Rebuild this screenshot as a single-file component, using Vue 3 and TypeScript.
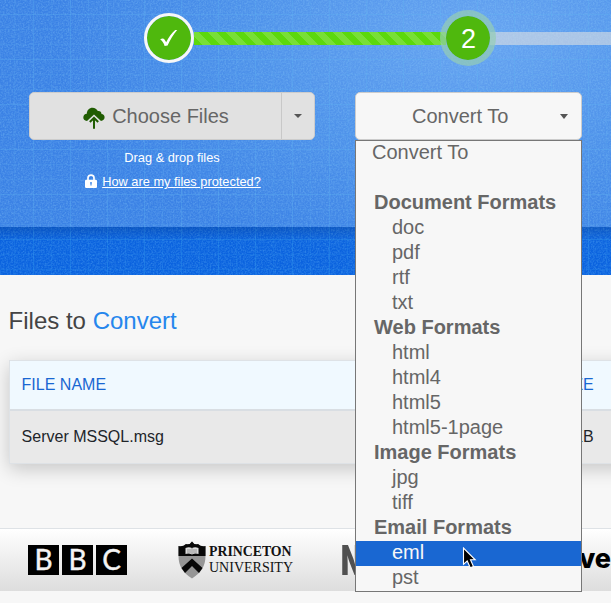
<script setup lang="ts">
import { ref } from 'vue'

interface Row {
  text: string
  kind: 'top' | 'group' | 'item'
}

const groups: { title: string; items: string[] }[] = [
  { title: 'Document Formats', items: ['doc', 'pdf', 'rtf', 'txt'] },
  { title: 'Web Formats', items: ['html', 'html4', 'html5', 'html5-1page'] },
  { title: 'Image Formats', items: ['jpg', 'tiff'] },
  { title: 'Email Formats', items: ['eml', 'pst'] },
]

const rows: Row[] = [
  { text: 'Convert To', kind: 'top' },
  { text: '', kind: 'top' },
  ...groups.flatMap((g): Row[] => [
    { text: g.title, kind: 'group' },
    ...g.items.map((text): Row => ({ text, kind: 'item' })),
  ]),
]

const active = ref('eml')
</script>

<template>
  <div class="page">
    <section class="hero">
      <svg class="texture" width="611" height="275" aria-hidden="true">
        <defs>
          <filter id="grain" x="0" y="0" width="100%" height="100%">
            <feTurbulence type="fractalNoise" baseFrequency="0.6" numOctaves="2" seed="4" />
            <feColorMatrix values="0 0 0 0 0.2  0 0 0 0 0.6  0 0 0 0 0.98  0.6 0 0 0 -0.22" />
          </filter>
          <pattern id="grid" x="33" y="14" width="37" height="45" patternUnits="userSpaceOnUse">
            <path d="M.5 0V45M0 .5H37" stroke="#35a0f0" stroke-opacity=".3" />
            <path d="M18.5 0V45M0 15.5H37M0 30.5H37" stroke="#35a0f0" stroke-opacity=".13" />
          </pattern>
        </defs>
        <rect width="611" height="275" filter="url(#grain)" />
        <rect width="611" height="275" fill="url(#grid)" />
      </svg>
      <div class="panel">
        <div class="steps">
          <div class="step done">
            <svg width="24" height="24" viewBox="0 0 24 24"><path d="M3.2 13.6C4.8 12 6.6 12 7.5 13.6L9.2 16.2C11.9 11 14.7 6.9 18.2 4H20.2C16.3 8.5 13.2 13.5 10.6 19.4L7.6 20C6.9 17.6 5.6 15.2 3.2 13.6Z" fill="#fff" /></svg>
          </div>
          <div class="bar filled"></div>
          <div class="step current">2</div>
          <div class="bar"></div>
        </div>
        <div class="actions">
          <div class="upload">
            <div class="button choose">
              <div class="choose-main">
                <svg width="22" height="22" viewBox="0 0 22 22">
                  <path d="M4 14C1.4 13.5.3 12 .3 10.4C.3 8.4 1.8 6.9 3.8 6.8C3.8 3.4 6.3.8 9.5.8C12 .8 13.8 2.1 14.8 4.1C17 3.7 18.5 5.1 18.5 7C20.4 7.2 21.6 8.6 21.6 10.3C21.6 12.4 20 13.8 18 14L11 7.6Z" fill="#205c02" />
                  <path d="M11 21.7V11.5M6.8 15L11 11L15.2 15" fill="none" stroke="#205c02" stroke-width="2" />
                </svg>
                <span>Choose Files</span>
              </div>
              <div class="choose-more"><i class="caret"></i></div>
            </div>
            <p class="hint">Drag &amp; drop files</p>
            <p class="hint protect">
              <svg width="12" height="14" viewBox="0 0 12 14">
                <path d="M3 7V3.8C3 .1 9 .1 9 3.8V7" fill="none" stroke="#fff" stroke-width="1.7" />
                <rect y="5.7" width="12" height="8.3" rx="1.2" fill="#fff" />
                <path d="M6 8V11.6M5 9H7" stroke="#4c8fe8" stroke-width="1.2" />
              </svg>
              <a>How are my files protected?</a>
            </p>
          </div>
          <div class="select">
            <div class="button convert"><span>Convert To</span><i class="caret"></i></div>
            <ul class="menu">
              <li v-for="(row, i) in rows" :key="i" :class="[row.kind, { active: row.text === active }]">{{ row.text }}</li>
            </ul>
          </div>
        </div>
      </div>
    </section>

    <section class="files">
      <h2>Files to <span>Convert</span></h2>
      <div class="table">
        <div class="row head"><span>FILE NAME</span><span class="size">SIZE</span></div>
        <div class="row"><span>Server MSSQL.msg</span><span class="size">77 KB</span></div>
      </div>
    </section>

    <section class="brands">
      <div class="bbc"><b>B</b><b>B</b><b>C</b></div>
      <div class="princeton">
        <svg width="28" height="38" viewBox="0 0 28 38">
          <path d="M.5 5Q5 6 8 3Q12 4 14 .5Q16 4 20 3Q23 6 27.5 5V15C27.5 25 23 32 14 37.5C5 32 .5 25 .5 15Z" fill="#969696" />
          <path d="M.5 5Q5 6 8 3Q12 4 14 .5Q16 4 20 3Q23 6 27.5 5V15H.5Z" fill="#080808" />
          <path d="M3.5 27L14 17.5L24.5 27L21 32L14 25L7 32Z" fill="#080808" />
          <path d="M7.5 7Q11 5.5 14 7Q17 5.5 20.5 7V13Q17 12 14 13.5Q11 12 7.5 13Z" fill="#ddd" />
          <path d="M9 9H13M9 11H13M15 9H19M15 11H19M14 7V13" stroke="#777" stroke-width=".7" />
        </svg>
        <div class="wordmark"><strong>PRINCETON</strong><span>UNIVERSITY</span></div>
      </div>
      <div class="letter">N</div>
      <div class="tail">ve</div>
    </section>

    <svg class="cursor" width="16" height="24" viewBox="0 0 16 24">
      <path d="M1.5 1V17.3L5.2 14L8.3 20.8L11.5 19.4L8.5 12.8H13.2Z" fill="#000" stroke="#fff" stroke-width="1.1" />
    </svg>
  </div>
</template>

<style>
body {
  background: #f7f7f7;
  overflow: hidden;
}
</style>

<style scoped>
* {
  box-sizing: border-box;
}
.page {
  position: relative;
  width: 611px;
  height: 603px;
  overflow: hidden;
  background: #f7f7f7;
  font-family: 'Liberation Sans', Arial, sans-serif;
  color: #212529;
}
.hero {
  position: relative;
  height: 275px;
  background: radial-gradient(ellipse 430px 230px at 480px 35px, #428eee 0%, #2277e5 55%, #0b63df 100%);
}
.texture {
  position: absolute;
  inset: 0;
}
.panel {
  position: relative;
  height: 227px;
  padding-top: 10px;
  background: rgba(255, 255, 255, .2);
}
.panel::after {
  content: '';
  position: absolute;
  top: 227px;
  left: 0;
  right: 0;
  height: 14px;
  background: linear-gradient(rgba(0, 25, 80, .2), transparent);
}
.steps {
  display: flex;
  align-items: center;
  width: 760px;
  height: 56px;
  padding-left: 144px;
}
.step {
  flex: none;
  display: flex;
  align-items: center;
  justify-content: center;
  border-radius: 50%;
  background: #4fb80d;
  background-clip: padding-box;
  color: #fff;
  font-size: 27px;
}
.done {
  width: 50px;
  height: 50px;
  border: 3px solid #f7f7f7;
}
.current {
  z-index: 1;
  width: 56px;
  height: 56px;
  margin: 0 -6px;
  padding: 2px 0 0 1px;
  border: 6px solid rgba(150, 205, 180, .7);
}
.bar {
  flex: 1;
  height: 13px;
  background: rgba(225, 225, 225, .58);
}
.bar.filled {
  flex: none;
  width: 252px;
  background: repeating-linear-gradient(45deg, #5cd80d 0 6.3px, #78df36 6.3px 12.6px);
}
.actions {
  display: flex;
  gap: 40px;
  padding: 26px 0 0 29px;
}
.upload {
  width: 286px;
}
.button {
  display: flex;
  height: 48px;
  border: 1px solid #ccc;
  border-radius: 5px;
  color: #666;
  font-size: 20px;
}
.choose {
  background: #e1e1e1;
}
.choose-main {
  display: flex;
  align-items: center;
  justify-content: center;
  gap: 7px;
  width: 252px;
  border-right: 1px solid #c8c8c8;
}
.choose-main svg {
  margin: 3px 0 0 1px;
}
.choose-more {
  flex: 1;
  display: flex;
  align-items: center;
  justify-content: center;
}
.caret {
  border: 4.5px solid transparent;
  border-top-color: #555;
  border-bottom: 0;
}
.convert .caret {
  border-width: 5px 4.5px 0;
}
.hint {
  display: flex;
  justify-content: center;
  margin: 10px 0 0;
  color: #fff;
  font-size: 12.8px;
  line-height: 16px;
}
.protect {
  gap: 5px;
  margin-top: 8px;
  padding-left: 2px;
}
.protect a {
  text-decoration: underline;
}
.select {
  position: relative;
  width: 227px;
}
.convert {
  align-items: center;
  padding: 0 13px 0 56px;
  justify-content: space-between;
  background: #f7f7f7;
}
.menu {
  position: absolute;
  z-index: 5;
  top: 48px;
  left: 0;
  width: 227px;
  margin: 0;
  padding: 0;
  list-style: none;
  border: 1px solid #777;
  background: #f7f7f7;
  color: #666;
  font-size: 20px;
  line-height: 23px;
}
.menu li {
  height: 25px;
  padding-left: 16px;
}
.menu .group {
  padding-left: 18px;
  font-weight: bold;
}
.menu .item {
  padding-left: 36px;
}
.menu .active {
  background: #1967d2;
  color: #f7f7f7;
}
.files {
  height: 253px;
  padding: 32px 0 0 8.6px;
}
h2 {
  margin: 0 0 25px;
  color: #444;
  font-size: 24px;
  font-weight: normal;
  line-height: 28px;
}
h2 span {
  color: #2586ed;
}
.table {
  width: 640px;
  height: 104px;
  border: 1px solid #dee2e6;
  box-shadow: 0 5px 18px rgba(0, 0, 0, .2);
}
.row {
  display: flex;
  align-items: center;
  justify-content: space-between;
  height: 52px;
  padding: 0 54px 1px 12px;
  background: #e9e9e9;
  font-size: 16px;
}
.head {
  height: 50px;
  padding-bottom: 0;
  border-bottom: 2px solid #d9dee3;
  background: #f0f9ff;
  color: #1967d2;
}
.brands {
  display: flex;
  align-items: center;
  height: 63px;
  padding-left: 28px;
  border-top: 1px solid #dee2e6;
  background: linear-gradient(#fff, #ddd);
}
.bbc {
  display: flex;
  gap: 3px;
}
.bbc b {
  width: 31px;
  height: 30px;
  background: #000;
  color: #f4f4f4;
  font: 400 28px/29px Lato, sans-serif;
  text-align: center;
  -webkit-text-stroke: .4px #f4f4f4;
}
.princeton {
  display: flex;
  align-items: center;
  gap: 3px;
  width: 165px;
  margin-left: 51px;
}
.wordmark {
  display: flex;
  flex-direction: column;
  color: #111;
  font: 14px/16px 'Liberation Serif', serif;
}
.wordmark strong {
  font-size: 13.8px;
}
.letter {
  width: 42px;
  color: #505050;
  font: 900 41px/50px Inter, sans-serif;
  transform: scaleX(.65);
  transform-origin: 0 50%;
}
.tail {
  margin: -3px 0 0 196px;
  color: #000;
  font: 800 27px/30px Inter, sans-serif;
}
.cursor {
  position: absolute;
  z-index: 10;
  left: 462px;
  top: 547px;
}
</style>
